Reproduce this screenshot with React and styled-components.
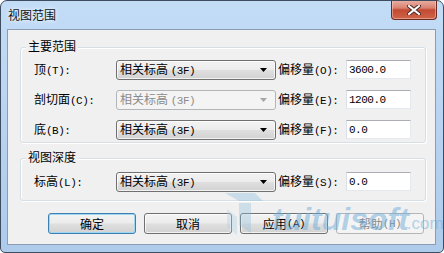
import React from 'react';
import styled, {createGlobalStyle} from 'styled-components';

const GlobalStyle = createGlobalStyle`
    html, body {
        margin: 0;
        padding: 0;
        background: #fff;
    }
    * {
        box-sizing: border-box;
    }
`

const Window = styled.div`
    position: relative;
    width: 444px;
    height: 253px;
    display: flex;
    flex-direction: column;
    border: 1px solid #3d4c5e;
    border-radius: 7px 7px 5px 5px;
    background: linear-gradient(180deg, #c3dcf6 0%, #b9d4f2 45%, #aecbeb 100%);
    overflow: hidden;
    font-family: "Noto Sans CJK SC", "Noto Sans", sans-serif;
    font-size: 12px;
    color: #000;
`
const TitleBar = styled.div`
    height: 28px;
    flex: none;
    display: flex;
    justify-content: space-between;
    align-items: flex-start;
    padding: 0 6px 0 7px;
`
const Caption = styled.div`
    line-height: 28px;
    color: #111;
    text-shadow: 0 0 5px #eef6ff, 0 0 3px #eef6ff;
`
const CloseButton = styled.div`
    width: 46px;
    height: 20px;
    margin-top: -1px;
    display: flex;
    align-items: center;
    justify-content: center;
    border: 1px solid #6b2a22;
    border-top: none;
    border-radius: 0 0 4px 4px;
    background: linear-gradient(180deg, #e9b2a6 0%, #d98271 42%, #c34a33 52%, #cf6447 100%);
    box-shadow: inset 0 0 0 1px rgba(255, 220, 210, 0.45);
`
const Client = styled.div`
    flex: 1;
    margin: 0 7px 7px 6px;
    display: flex;
    flex-direction: column;
    padding: 17px 9px 0 12px;
    border: 1px solid #8c9db3;
    background: #f0f0f0;
`
const Group = styled.div`
    position: relative;
    display: flex;
    flex-direction: column;
    gap: 10px;
    margin-top: ${props => props.gapAbove || 0}px;
    padding: ${props => props.pad};
    border: 1px solid #d5dfe5;
    border-radius: 3px;
    box-shadow: inset 1px 1px 0 #fff, 1px 1px 0 #fff;
`
const GroupTitle = styled.div`
    position: absolute;
    top: -9px;
    left: 5px;
    padding: 0 2px;
    line-height: 14px;
    background: #f0f0f0;
`
const Row = styled.div`
    display: grid;
    grid-template-columns: 82px 160px 70px 65px;
    align-items: center;
    height: 20px;
`
const Label = styled.div`
    white-space: nowrap;
    line-height: 14px;
    padding-left: ${props => props.indent || 0}px;
`
const Key = styled.span`
    font-family: "Liberation Mono", monospace;
    font-size: 11px;
    letter-spacing: -0.5px;
`
const Combo = styled.div`
    height: 20px;
    display: flex;
    align-items: center;
    justify-content: space-between;
    padding: 0 8px 0 3px;
    border: 1px solid ${props => props.disabled ? "#b2b6b9" : "#707070"};
    border-radius: 3px;
    color: ${props => props.disabled ? "#8a8a8a" : "#000"};
    background: ${props => props.disabled
        ? "#f4f4f4"
        : "linear-gradient(180deg, #f3f3f3 0%, #ececec 48%, #dfdfdf 52%, #d2d2d2 100%)"};
    box-shadow: ${props => props.disabled ? "none" : "inset 0 0 0 1px rgba(255,255,255,0.7)"};
`
const ComboText = styled.span`
    white-space: nowrap;
    line-height: 14px;
`
const Edit = styled.div`
    height: 19px;
    align-self: start;
    display: flex;
    align-items: center;
    padding-left: 2px;
    border: 1px solid #e3e9ef;
    border-top-color: #abadb3;
    border-left-color: #dbdfe6;
    background: #fff;
    font-family: "Liberation Mono", monospace;
    font-size: 11px;
    letter-spacing: -0.5px;
`
const ButtonBar = styled.div`
    display: flex;
    gap: 8px;
    margin-top: 12px;
    padding-left: 28px;
`
const Button = styled.div`
    width: 88px;
    height: 21px;
    display: flex;
    align-items: center;
    justify-content: center;
    line-height: 14px;
    border: 1px solid ${props => props.isDefault ? "#3c7fb1" : props.disabled ? "#b2b6b9" : "#707070"};
    border-radius: 3px;
    color: ${props => props.disabled ? "#8a8a8a" : "#000"};
    background: ${props => props.disabled
        ? "#f4f4f4"
        : "linear-gradient(180deg, #f3f3f3 0%, #ececec 48%, #dfdfdf 52%, #d2d2d2 100%)"};
    box-shadow: ${props => props.isDefault
        ? "inset 0 0 0 1px #9fd6f3"
        : props.disabled ? "none" : "inset 0 0 0 1px rgba(255,255,255,0.7)"};
`
// faint site watermark stamped over the lower right of the screenshot
const Watermark = styled.div`
    position: absolute;
    left: 224px;
    top: 188px;
    display: flex;
    align-items: flex-end;
    pointer-events: none;
    color: rgba(110, 172, 216, 0.5);
    font-family: "Liberation Sans", sans-serif;
    font-style: italic;
    font-weight: bold;
`
const WatermarkWord = styled.span`
    font-size: 32px;
    line-height: 40px;
    margin-left: 3px;
`
const WatermarkDomain = styled.span`
    font-size: 17px;
    font-style: normal;
    font-weight: normal;
    line-height: 30px;
    margin-left: -2px;
`

const Arrow = ({disabled}) => (
    <svg width="7" height="4" viewBox="0 0 7 4">
        <path d="M0 0 H7 L3.5 4 Z" fill={disabled ? "#a6a6a6" : "#000"} />
    </svg>
)

const CloseGlyph = () => (
    <svg width="14" height="10" viewBox="0 0 14 10">
        <path d="M2 1 L12 9 M12 1 L2 9" stroke="#4a2a26" strokeWidth="4" strokeLinecap="square" />
        <path d="M2 1 L12 9 M12 1 L2 9" stroke="#fff" strokeWidth="2" strokeLinecap="square" />
    </svg>
)

const LogoMark = () => (
    <svg width="44" height="50" viewBox="0 0 44 50">
        <path d="M0 4 H30 L38 12 H14 Z" fill="rgba(140,190,222,0.4)" />
        <path d="M14 14 H26 V44 L14 36 Z" fill="rgba(140,190,222,0.35)" />
        <path d="M2 20 L12 28 V46 L2 38 Z" fill="rgba(170,205,228,0.35)" />
    </svg>
)

const mainRows = [
    {label: "顶", key: "(T):", offKey: "(O):", value: "3600.0"},
    {label: "剖切面", key: "(C):", offKey: "(E):", value: "1200.0", disabled: true},
    {label: "底", key: "(B):", offKey: "(F):", value: "0.0"},
]

const FieldRow = ({row}) => (
    <Row>
        <Label>{row.label}<Key>{row.key}</Key></Label>
        <Combo disabled={row.disabled}>
            <ComboText>相关标高 <Key>(3F)</Key></ComboText>
            <Arrow disabled={row.disabled} />
        </Combo>
        <Label indent={2}>偏移量<Key>{row.offKey}</Key></Label>
        <Edit>{row.value}</Edit>
    </Row>
)

const App = () => {
    return (
        <>
            <GlobalStyle />
            <Window>
                <TitleBar>
                    <Caption>视图范围</Caption>
                    <CloseButton><CloseGlyph /></CloseButton>
                </TitleBar>
                <Client>
                    <Group pad="12px 0 2px 13px">
                        <GroupTitle>主要范围</GroupTitle>
                        {mainRows.map(row => <FieldRow key={row.label} row={row} />)}
                    </Group>
                    <Group gapAbove={15} pad="13px 0 8px 13px">
                        <GroupTitle>视图深度</GroupTitle>
                        <FieldRow row={{label: "标高", key: "(L):", offKey: "(S):", value: "0.0"}} />
                    </Group>
                    <ButtonBar>
                        <Button isDefault>确定</Button>
                        <Button>取消</Button>
                        <Button>应用<Key>(A)</Key></Button>
                        <Button disabled>帮助<Key>(H)</Key></Button>
                    </ButtonBar>
                </Client>
                <Watermark>
                    <LogoMark />
                    <WatermarkWord>tuituisoft</WatermarkWord>
                    <WatermarkDomain>.com</WatermarkDomain>
                </Watermark>
            </Window>
        </>
    );
};

export default App;
